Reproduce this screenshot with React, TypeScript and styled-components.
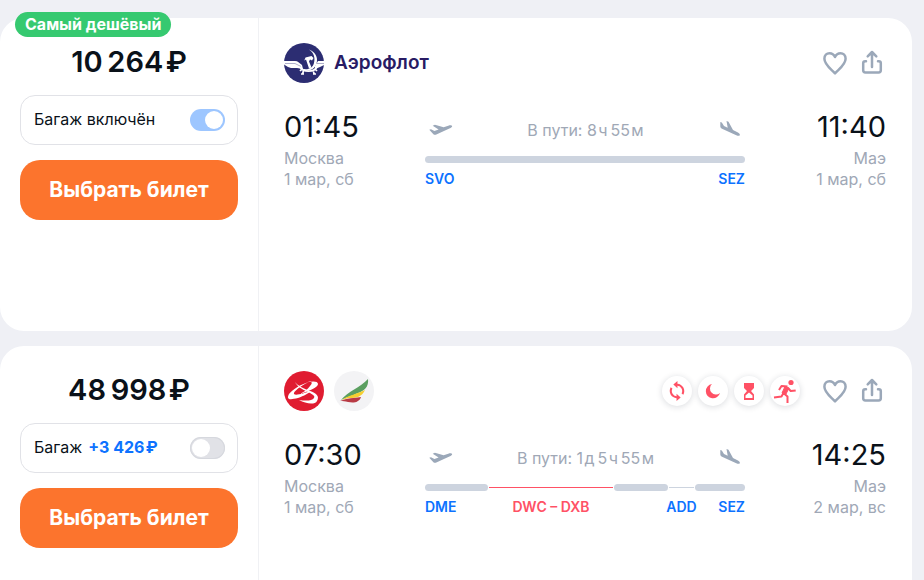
import React from 'react';
import styled, { createGlobalStyle, css } from 'styled-components';

const GlobalStyle = createGlobalStyle`
  *, *::before, *::after { box-sizing: border-box; }
  body {
    margin: 0;
    background: #eff0f5;
    color: #0a1119;
    font-family: Inter, "Liberation Sans", sans-serif;
    font-size: 16px;
  }
  button, input { font: inherit; }
`;

const TicketList = styled.main`
  display: flex;
  flex-direction: column;
  gap: 15px;
  height: 100vh;
  padding: 18px 12px 0 0;
  overflow: hidden;
`;

const Card = styled.article`
  position: relative;
  display: flex;
  flex: none;
  min-height: 313px;
  background: #fff;
  border-radius: 24px;
`;

const Badge = styled.span`
  position: absolute;
  top: -6px;
  left: 15px;
  padding: 0 10px;
  border-radius: 13px;
  background: #36c970;
  color: #fff;
  font-weight: 700;
  line-height: 25px;
  white-space: nowrap;
`;

const Offer = styled.section`
  flex: none;
  width: 259px;
  padding: 24px 20px;
  border-right: 1px solid #f0f1f4;
`;

const Price = styled.h2`
  margin: 0 0 13px;
  font-size: 29px;
  font-weight: 600;
  line-height: 40px;
  text-align: center;
  white-space: nowrap;
`;

const Baggage = styled.label`
  display: flex;
  align-items: center;
  justify-content: space-between;
  height: 50px;
  margin-bottom: 15px;
  padding: 0 12px 0 13px;
  border: 1px solid #e1e2e7;
  border-radius: 15px;
  line-height: 20px;
  white-space: nowrap;
`;

const BaggageText = styled.span`
  display: flex;
  gap: 6px;
  padding-bottom: 2px;
`;

const Surcharge = styled.b`
  color: #0d72ff;
  font-weight: 700;
`;

const Toggle = styled.input`
  appearance: none;
  display: flex;
  align-items: center;
  width: 35px;
  height: 22px;
  margin: 0;
  padding: 0 2px;
  border-radius: 11px;
  background: #e1e2e7;
  box-shadow: inset 0 0 0 1px #d6d8de;

  &::before {
    content: "";
    width: 18px;
    height: 18px;
    border-radius: 50%;
    background: #fff;
  }

  &:checked {
    justify-content: flex-end;
    background: #9dc6ff;
    box-shadow: none;
  }
`;

const SelectButton = styled.button`
  width: 100%;
  height: 60px;
  padding: 0 0 1px;
  border: 0;
  border-radius: 20px;
  background: #fc742d;
  color: #fff;
  font-size: 21px;
  font-weight: 700;
`;

const Flight = styled.section`
  flex: 1;
  min-width: 0;
  padding: 25px 26px 25px 25px;
`;

const FlightHeader = styled.header`
  display: flex;
  align-items: center;
  height: 40px;
  margin-bottom: 24px;
`;

const Carriers = styled.div`
  display: flex;
  align-items: center;
  gap: 10px;
  margin-right: auto;

  svg { display: block; }
`;

const CarrierName = styled.span`
  padding-bottom: 2px;
  color: #281b64;
  font-size: 19px;
  font-weight: 600;
`;

const Warnings = styled.ul`
  display: flex;
  gap: 6px;
  margin: 0 12px 0 0;
  padding: 0;
  list-style: none;
`;

const Warning = styled.li`
  display: flex;
  align-items: center;
  justify-content: center;
  width: 30px;
  height: 30px;
  border-radius: 50%;
  background: #fff;
  color: #ff5165;
  box-shadow: 0 1px 6px rgba(20, 30, 50, 0.16);
`;

const IconButton = styled.button`
  display: flex;
  align-items: center;
  justify-content: center;
  width: 28px;
  height: 28px;
  margin-left: 9px;
  padding: 0;
  border: 0;
  background: none;
  color: #9ba8b9;
`;

const Route = styled.div`
  display: grid;
  grid-template-columns: 141px minmax(0, 1fr) 141px;
`;

const Endpoint = styled.div<{ $end?: boolean }>`
  color: #a0a8b6;
  font-size: 16px;
  line-height: 21px;
  text-align: ${({ $end }) => ($end ? 'right' : 'left')};
`;

const Time = styled.time`
  display: block;
  margin-bottom: 1px;
  color: #0a1119;
  font-size: 29px;
  line-height: 40px;
`;

const Path = styled.div`
  padding-top: 9px;
`;

const Duration = styled.div`
  display: flex;
  align-items: center;
  justify-content: space-between;
  height: 28px;
  margin-bottom: 12px;
  padding: 0 2px 0 3px;
  color: #a0a8b6;
  white-space: nowrap;

  svg { color: #9ba8b9; }
`;

const Track = styled.div<{ $columns: string }>`
  display: grid;
  grid-template-columns: ${({ $columns }) => $columns};
  column-gap: 1px;
  row-gap: 6px;
  align-items: center;
`;

type LegKind = 'air' | 'stop' | 'longStop';

const Leg = styled.span<{ $kind: LegKind }>`
  grid-row: 1;
  ${({ $kind }) =>
    $kind === 'air'
      ? css`
          height: 7px;
          border-radius: 4px;
          background: #cdd4df;
        `
      : css`
          height: 1px;
          background: ${$kind === 'longStop' ? '#ff5165' : '#cdd4df'};
        `}
`;

const Code = styled.span<{ $column: number; $align: string; $alert?: boolean }>`
  grid-row: 2;
  grid-column: ${({ $column }) => $column};
  justify-self: ${({ $align }) => $align};
  color: ${({ $alert }) => ($alert ? '#ff5165' : '#0d72ff')};
  font-size: 14px;
  font-weight: 600;
  line-height: 20px;
  white-space: nowrap;
`;

const AeroflotLogo = () => (
  <svg width="40" height="40" viewBox="0 0 40 40" aria-hidden="true">
    <circle cx="20" cy="20" r="20" fill="#2c2d72" />
    <path d="M0 18h11c3 0 4 2 7 4l1 4-6-1H7l-3-1-4-2.500ZM40 18h-6l-3 5v3l5-2 4-2Z" fill="#fff" />
    <path d="M1 20.500h10l6 3M40 20.500h-7" fill="none" stroke="#8d8eb4" strokeWidth=".7" />
    <path d="M25 6.500c6 2 9.500 8 7.500 14-2 7-10 9-15 5 6 2 11 0 12.500-5.500 1.500-6-.5-10.500-5-13.500Z" fill="#fff" />
    <path d="m20.500 17 1-2.500 6-1.500 2 2-1.500 2.500-2-1-1 2 2.500 6-2.500 1-3-9-1.500 1Z" fill="#fff" />
    <path d="M16 24c3 5.500 14 5.500 17 0M19.500 27.500l-1 4M29 27.500l1.500 4M17 31h3M29 31h3M18 26l-2 2M31 26l2 2" fill="none" stroke="#fff" strokeWidth="1.700" />
  </svg>
);

const RedWingsLogo = () => (
  <svg width="40" height="40" viewBox="0 0 40 40" aria-hidden="true">
    <circle cx="20" cy="20" r="20" fill="#e01c31" />
    <path d="M25 11c-8 2-17 8-20 12-3 6 1 6 9 4 6-2 11-5 13-7-7 2-15 5-17 3-1-2 6-8 15-12Z" fill="#fff" />
    <path d="M11 11c2 4 6 7 13 10 6 3 7 4 6 6-2 3-8 3-15 2 7 4 16 5 18 1 3-5-1-8-7-10-7-3-12-5-15-9Z" fill="#fff" />
    <path d="M24 11c4-1 5 1 2 4-2 3-6 6-10 8 10-3 18-7 18-10 0-3-5-3-10-2Z" fill="#fff" />
  </svg>
);

const EthiopianLogo = () => (
  <svg width="40" height="40" viewBox="0 0 40 40" aria-hidden="true">
    <circle cx="20" cy="20" r="20" fill="#f3f3f5" />
    <path d="M7 29c7-9 19-12 27-21 1 8-4 12-10 14-6 3-11 4-17 7Z" fill="#5b9f60" />
    <path d="M8 29c6-5 16-6 23-10-3 7-9 8-15 8-3 0-5 1-8 2Z" fill="#f6cf2f" />
    <path d="M6 30c7-3 14-3 21-4-2 6-8 6-13 5-3-1-5-1-8-1Z" fill="#b83a45" />
  </svg>
);

const HeartIcon = () => (
  <svg width="28" height="28" viewBox="0 0 28 28" fill="none" stroke="currentColor" strokeWidth="2.500" strokeLinejoin="round" aria-hidden="true">
    <path d="M14 24.300C10.500 20.400 3.400 15.700 3.400 9.700 3.400 6.200 5.700 4.200 8.500 4.200c2.500 0 4.500 1.500 5.500 3.800 1-2.300 3-3.800 5.500-3.800 2.800 0 5.100 2 5.100 5.500 0 6-7.100 10.700-10.600 14.600Z" />
  </svg>
);

const ShareIcon = () => (
  <svg width="28" height="28" viewBox="0 0 28 28" fill="none" stroke="currentColor" strokeWidth="2.500" strokeLinecap="round" strokeLinejoin="round" aria-hidden="true">
    <path d="M8 12.200H7.200q-2 0-2 2v7q0 2.200 2.200 2.200h13.200q2.200 0 2.200-2.200v-7q0-2-2-2H20M14 18V3.500M9.700 7.300 14 3l4.300 4.300" />
  </svg>
);

const TakeoffIcon = () => (
  <svg width="26" height="20" viewBox="0 0 26 20" fill="currentColor" aria-hidden="true">
    <path d="M1.300 9.800 3 9.300 6.400 11l4.200-1.500L4.700 5.700l2.200-.9 8.700 2.500 4.700-1.600c1.900-.7 3.500-.4 3.800.3.300.9-.9 1.900-2.700 2.500L7.800 14.700c-.8.3-1.700.1-2.400-.4Z" />
  </svg>
);

const LandingIcon = () => (
  <svg width="26" height="20" viewBox="0 0 26 20" fill="currentColor" aria-hidden="true">
    <path d="M3.300 2 4.800 2.500 7 6l3.700 1.700L9.500 1l2 .8L16 10l4.500 2.200c1.800.9 2.700 2.200 2.300 3-.4.8-1.900.8-3.500.1L5 8.700C3.900 8.200 3.300 7.400 3.300 6.300Z" />
  </svg>
);

const TransferIcon = () => (
  <svg width="22" height="22" viewBox="0 0 24 24" fill="currentColor" aria-hidden="true">
    <path d="M12.500 1v3.100A8 8 0 0 1 18.900 16l-1.900-1.400A5.800 5.800 0 0 0 12.500 6.200V9L8 5ZM11.500 23v-3.100A8 8 0 0 1 5.100 8L7 9.400a5.800 5.800 0 0 0 4.500 8.400V15l4.500 4Z" />
  </svg>
);

const NightIcon = () => (
  <svg width="18" height="18" viewBox="0 0 18 18" fill="currentColor" aria-hidden="true">
    <path d="M8 2a6 6 0 0 0 8 9A7.200 7.200 0 1 1 8 2Z" />
  </svg>
);

const HourglassIcon = () => (
  <svg width="12" height="18" viewBox="0 0 12 18" aria-hidden="true">
    <path d="M1 1h10v5L8 9l3 3.500V18H1v-5.500L4 9 1 6Z" fill="currentColor" />
    <path d="m6 10.500-3.500 3v2.500h7v-2.500Z" fill="#fff" />
  </svg>
);

const RunnerIcon = () => (
  <svg width="24" height="24" viewBox="0 0 24 24" fill="none" stroke="currentColor" strokeWidth="2" strokeLinejoin="round" aria-hidden="true">
    <circle cx="18" cy="3.500" r="2.600" fill="currentColor" stroke="none" />
    <path d="M6 11 8.500 7l6 .5M15 9l2.700 3 5-.6M11 13l-2.500 4.500L1 18.500M11 14.500l3.500 3V24" />
    <path d="m12 7.500-3 6.500 3.500 2L16 9Z" fill="currentColor" strokeWidth="1" />
  </svg>
);

interface Stop {
  code: string;
  column: number;
  align: 'start' | 'center' | 'end';
  alert?: boolean;
}

interface Ticket {
  id: string;
  badge?: string;
  price: string;
  baggage: string;
  surcharge?: string;
  logos: React.ReactNode;
  carrier?: string;
  warnings: { label: string; icon: React.ReactNode }[];
  from: [string, string, string];
  to: [string, string, string];
  duration: string;
  columns: string;
  legs: LegKind[];
  stops: Stop[];
}

const tickets: Ticket[] = [
  {
    id: 'su',
    badge: 'Самый дешёвый',
    price: '10\u2009264\u200a₽',
    baggage: 'Багаж включён',
    logos: <AeroflotLogo />,
    carrier: 'Аэрофлот',
    warnings: [],
    from: ['01:45', 'Москва', '1 мар, сб'],
    to: ['11:40', 'Маэ', '1 мар, сб'],
    duration: 'В пути: 8\u200aч\u200955\u200aм',
    columns: '1fr',
    legs: ['air'],
    stops: [
      { code: 'SVO', column: 1, align: 'start' },
      { code: 'SEZ', column: 1, align: 'end' },
    ],
  },
  {
    id: 'wz-et',
    price: '48\u2009998\u200a₽',
    baggage: 'Багаж',
    surcharge: '+3 426\u200a₽',
    logos: (
      <>
        <RedWingsLogo />
        <EthiopianLogo />
      </>
    ),
    warnings: [
      { label: 'Смена аэропорта', icon: <TransferIcon /> },
      { label: 'Ночная пересадка', icon: <NightIcon /> },
      { label: 'Долгая пересадка', icon: <HourglassIcon /> },
      { label: 'Короткая пересадка', icon: <RunnerIcon /> },
    ],
    from: ['07:30', 'Москва', '1 мар, сб'],
    to: ['14:25', 'Маэ', '2 мар, вс'],
    duration: 'В пути: 1\u200aд\u20095\u200aч\u200955\u200aм',
    columns: [63, 124, 54, 25, 50].map((share) => `minmax(0, ${share}fr)`).join(' '),
    legs: ['air', 'longStop', 'air', 'stop', 'air'],
    stops: [
      { code: 'DME', column: 1, align: 'start' },
      { code: 'DWC – DXB', column: 2, align: 'center', alert: true },
      { code: 'ADD', column: 4, align: 'center' },
      { code: 'SEZ', column: 5, align: 'end' },
    ],
  },
];

const TicketCard = ({ ticket }: { ticket: Ticket }) => (
  <Card>
    {ticket.badge && <Badge>{ticket.badge}</Badge>}
    <Offer>
      <Price>{ticket.price}</Price>
      <Baggage htmlFor={`baggage-${ticket.id}`}>
        <BaggageText>
          {ticket.baggage}
          {ticket.surcharge && <Surcharge>{ticket.surcharge}</Surcharge>}
        </BaggageText>
        <Toggle id={`baggage-${ticket.id}`} type="checkbox" defaultChecked={!ticket.surcharge} />
      </Baggage>
      <SelectButton type="button">Выбрать билет</SelectButton>
    </Offer>
    <Flight>
      <FlightHeader>
        <Carriers>
          {ticket.logos}
          {ticket.carrier && <CarrierName>{ticket.carrier}</CarrierName>}
        </Carriers>
        {ticket.warnings.length > 0 && (
          <Warnings>
            {ticket.warnings.map(({ label, icon }) => (
              <Warning key={label} aria-label={label}>{icon}</Warning>
            ))}
          </Warnings>
        )}
        <IconButton type="button" aria-label="В избранное"><HeartIcon /></IconButton>
        <IconButton type="button" aria-label="Поделиться"><ShareIcon /></IconButton>
      </FlightHeader>
      <Route>
        <Endpoint>
          <Time>{ticket.from[0]}</Time>
          <div>{ticket.from[1]}</div>
          <div>{ticket.from[2]}</div>
        </Endpoint>
        <Path>
          <Duration>
            <TakeoffIcon />
            <span>{ticket.duration}</span>
            <LandingIcon />
          </Duration>
          <Track $columns={ticket.columns}>
            {ticket.legs.map((kind, index) => <Leg key={index} $kind={kind} />)}
            {ticket.stops.map(({ code, column, align, alert }) => (
              <Code key={code} $column={column} $align={align} $alert={alert}>{code}</Code>
            ))}
          </Track>
        </Path>
        <Endpoint $end>
          <Time>{ticket.to[0]}</Time>
          <div>{ticket.to[1]}</div>
          <div>{ticket.to[2]}</div>
        </Endpoint>
      </Route>
    </Flight>
  </Card>
);

export default function App() {
  return (
    <>
      <GlobalStyle />
      <TicketList>
        {tickets.map((ticket) => <TicketCard key={ticket.id} ticket={ticket} />)}
      </TicketList>
    </>
  );
}
